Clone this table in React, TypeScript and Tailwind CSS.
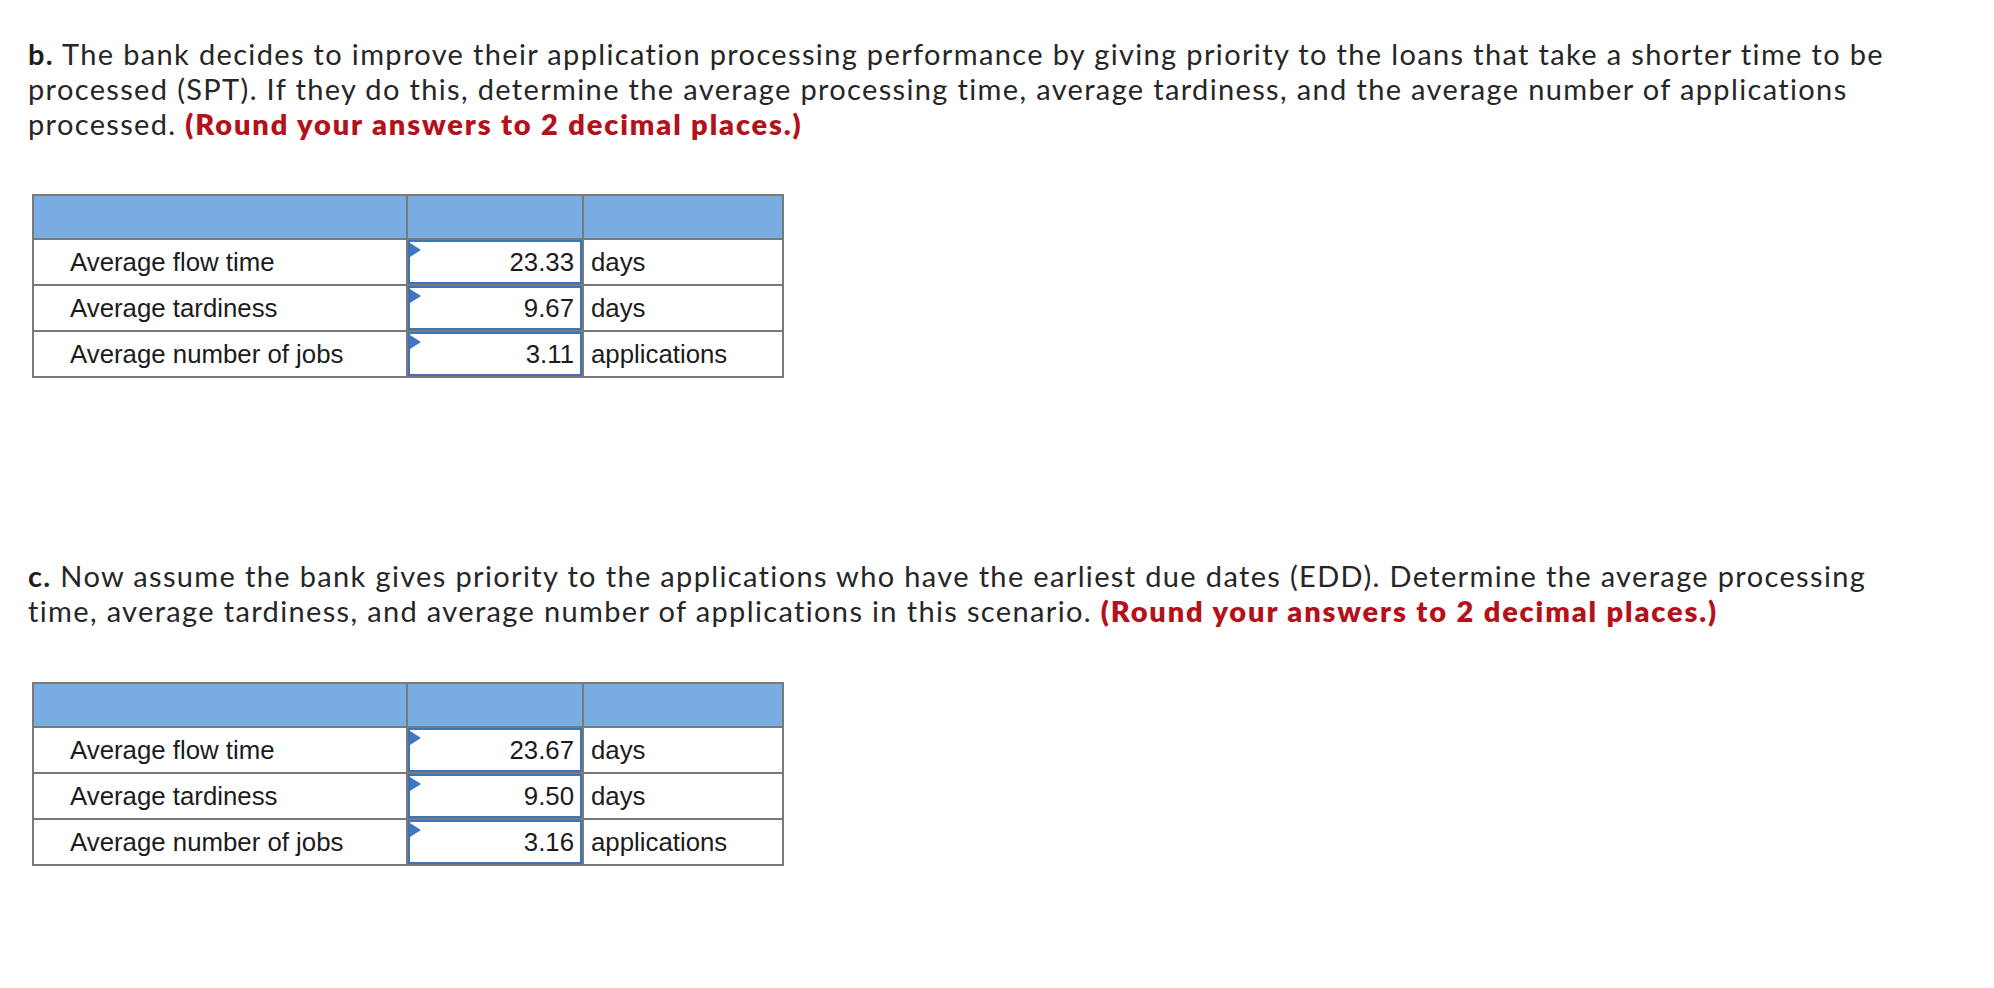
import React from 'react';

type Row = { label: string; value: string; unit: string };

const partB: Row[] = [
  { label: 'Average flow time', value: '23.33', unit: 'days' },
  { label: 'Average tardiness', value: '9.67', unit: 'days' },
  { label: 'Average number of jobs', value: '3.11', unit: 'applications' },
];

const partC: Row[] = [
  { label: 'Average flow time', value: '23.67', unit: 'days' },
  { label: 'Average tardiness', value: '9.50', unit: 'days' },
  { label: 'Average number of jobs', value: '3.16', unit: 'applications' },
];

function Flag() {
  return (
    <svg className="absolute left-0 top-[1px]" width="11" height="14" viewBox="0 0 11 14">
      <polygon points="0,0 11,7 0,14" fill="#3b77c2" />
    </svg>
  );
}

function AnswerTable({ rows }: { rows: Row[] }) {
  return (
    <div className="ml-[32px] grid w-[752px] grid-cols-[372px_174px_198px] gap-[2px] bg-[#7a7a7a] p-[2px] font-['Liberation_Sans',Arial,sans-serif] text-[25.8px] tracking-normal text-[#1c1c1c]">
      <div className="h-[42px] bg-[#79ade2]" />
      <div className="h-[42px] bg-[#79ade2]" />
      <div className="h-[42px] bg-[#79ade2]" />
      {rows.map((r) => (
        <React.Fragment key={r.label}>
          <div className="flex h-[44px] items-center bg-white pl-[36px]">{r.label}</div>
          <div className="relative flex h-[44px] items-center justify-end border-2 border-[#3d74b8] bg-white pr-[6px]">
            <Flag />
            {r.value}
          </div>
          <div className="flex h-[44px] items-center bg-white pl-[7px]">{r.unit}</div>
        </React.Fragment>
      ))}
    </div>
  );
}

export default function App() {
  return (
    <div className="min-h-screen bg-white font-['Lato','Noto_Sans',sans-serif] text-[29px] leading-[35px] tracking-[1.35px] text-[#262626]">
      <div className="pl-[28px] pt-[36px]">
        <div className="whitespace-nowrap">
          <b className="font-bold text-[#1e1e1e]">b.</b> The bank decides to improve their application processing performance by giving priority to the loans that take a shorter time to be
        </div>
        <div className="whitespace-nowrap">
          processed (SPT). If they do this, determine the average processing time, average tardiness, and the average number of applications
        </div>
        <div className="whitespace-nowrap">
          processed. <span className="font-extrabold tracking-[1.85px] text-[#b3121a]">(Round your answers to 2 decimal places.)</span>
        </div>
      </div>

      <div className="mt-[53px]">
        <AnswerTable rows={partB} />
      </div>

      <div className="pl-[28px] pt-[180px]">
        <div className="whitespace-nowrap">
          <b className="font-bold text-[#1e1e1e]">c.</b> Now assume the bank gives priority to the applications who have the earliest due dates (EDD). Determine the average processing
        </div>
        <div className="whitespace-nowrap">
          time, average tardiness, and average number of applications in this scenario. <span className="font-extrabold tracking-[1.85px] text-[#b3121a]">(Round your answers to 2 decimal places.)</span>
        </div>
      </div>

      <div className="mt-[54px] pb-[100px]">
        <AnswerTable rows={partC} />
      </div>
    </div>
  );
}
